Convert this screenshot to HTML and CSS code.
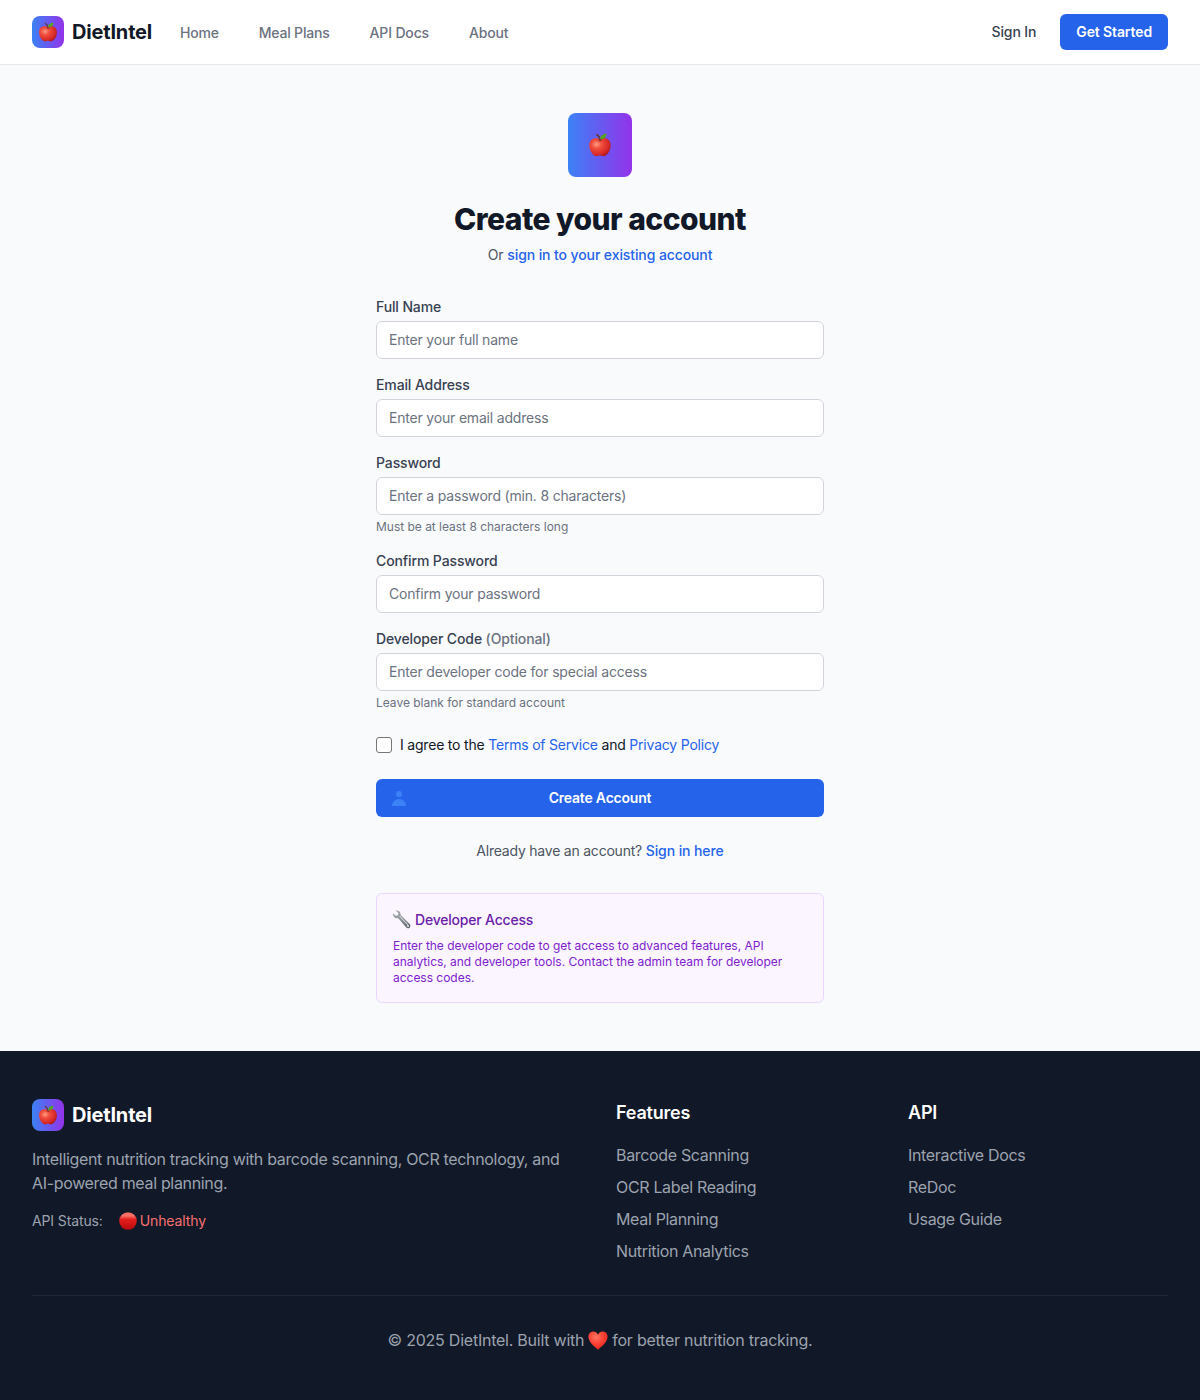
FILE: index.html
```html
<!DOCTYPE html>
<html lang="en">
<head>
<meta charset="utf-8">
<title>Create account - DietIntel</title>
<link rel="stylesheet" href="styles.css">
</head>
<body>
<svg class="defs" aria-hidden="true">
  <defs>
    <radialGradient id="apple-skin" cx=".34" cy=".34" r=".75"><stop offset="0" stop-color="#ff9c82"/><stop offset=".32" stop-color="#f04e3d"/><stop offset=".75" stop-color="#d82a28"/><stop offset="1" stop-color="#a8141a"/></radialGradient>
    <linearGradient id="ball" x1="0" y1="0" x2="0" y2="1"><stop offset="0" stop-color="#ff6a60"/><stop offset=".2" stop-color="#fb7068"/><stop offset=".42" stop-color="#e21d1a"/><stop offset="1" stop-color="#b90c10"/></linearGradient>
    <radialGradient id="heart-fill" cx=".4" cy=".3" r=".75"><stop offset="0" stop-color="#ff7562"/><stop offset=".5" stop-color="#fb4336"/><stop offset="1" stop-color="#dd211d"/></radialGradient>
    <linearGradient id="steel" x1="0" y1="0" x2="1" y2="1"><stop offset="0" stop-color="#a9b0b3"/><stop offset=".5" stop-color="#8b9296"/><stop offset="1" stop-color="#555b60"/></linearGradient>
    <symbol id="apple" viewBox="0 0 24 24">
      <path d="M12 6.5C9.5 4.2 1.3 4.4 1.3 12.3C1.3 18 5.2 23.2 8.5 23.2C10 23.2 10.8 22.5 12 22.5S14 23.2 15.5 23.2C18.8 23.2 22.7 18 22.7 12.3C22.7 4.4 14.5 4.2 12 6.5Z" fill="url(#apple-skin)"/>
      <path d="M9.4 6.9Q12 9.4 14.6 6.9" fill="none" stroke="#941116" stroke-width=".8" opacity=".5"/>
      <path d="M12.2 7.4C12 5 11 3 8.8 1.7" fill="none" stroke="#643829" stroke-width="1.4" stroke-linecap="round"/>
      <path d="M12.3 6.2C12 2.5 15 1.2 18.4.5C18.6 4 16.4 6.4 12.3 6.2Z" fill="#55a51f"/>
    </symbol>
  </defs>
</svg>
<nav class="navbar">
  <a class="brand"><span class="logo"><svg class="logo-apple"><use href="#apple"/></svg></span><span class="brand-name">DietIntel</span></a>
  <div class="nav-links"><a>Home</a><a>Meal Plans</a><a>API Docs</a><a>About</a></div>
  <div class="nav-actions"><a class="sign-in">Sign In</a><a class="get-started">Get Started</a></div>
</nav>
<main class="main">
  <div class="register">
    <div class="hero-logo"><svg class="hero-apple"><use href="#apple"/></svg></div>
    <h1 class="title">Create your account</h1>
    <p class="subtitle">Or <a class="link strong">sign in to your existing account</a></p>
    <form class="form">
      <div class="field"><label for="name">Full Name</label><input id="name" type="text" placeholder="Enter your full name"></div>
      <div class="field"><label for="email">Email Address</label><input id="email" type="email" placeholder="Enter your email address"></div>
      <div class="field"><label for="password">Password</label><input id="password" type="password" placeholder="Enter a password (min. 8 characters)"><p class="hint">Must be at least 8 characters long</p></div>
      <div class="field"><label for="confirm">Confirm Password</label><input id="confirm" type="password" placeholder="Confirm your password"></div>
      <div class="field"><label for="code">Developer Code <span class="optional">(Optional)</span></label><input id="code" type="text" placeholder="Enter developer code for special access"><p class="hint">Leave blank for standard account</p></div>
    </form>
    <div class="terms"><input id="terms" type="checkbox"><label for="terms">I agree to the <a class="link">Terms of Service</a> and <a class="link">Privacy Policy</a></label></div>
    <button class="submit" type="button"><svg class="user-icon" viewBox="0 0 20 20"><path fill="currentColor" d="M10 9a3 3 0 100-6 3 3 0 000 6zm-7 9a7 7 0 1114 0H3z"/></svg>Create Account</button>
    <p class="have-account">Already have an account? <a class="link strong">Sign in here</a></p>
    <section class="developer">
      <h2><svg class="wrench" viewBox="0 0 20 20"><path d="M1.1 3.5L4 6.1L6.4 5.4L6.7 3.1L3.8.6C6.7-.1 9.5 2 9 5.3L18.6 14.8C19.7 16 19.5 17.6 18.5 18.6S15.7 19.3 14.8 18.2L6.3 8.5C3.4 9.5.3 6.7 1.1 3.5Z" fill="url(#steel)"/><path d="M8 6.4L16.8 15.6" stroke="#ccd0d2" stroke-width="1.2"/><circle cx="16.9" cy="16.8" r="1" fill="#f3edf8"/></svg>Developer Access</h2>
      <p>Enter the developer code to get access to advanced features, API analytics, and developer tools. Contact the admin team for developer access codes.</p>
    </section>
  </div>
</main>
<footer class="footer">
  <div class="footer-grid">
    <div class="about">
      <a class="brand"><span class="logo"><svg class="logo-apple"><use href="#apple"/></svg></span><span class="brand-name">DietIntel</span></a>
      <p class="tagline">Intelligent nutrition tracking with barcode scanning, OCR technology, and AI-powered meal planning.</p>
      <div class="status"><span>API Status:</span><span class="unhealthy"><svg class="ball" viewBox="0 0 18 18"><circle cx="9" cy="9" r="8.8" fill="url(#ball)"/></svg>Unhealthy</span></div>
    </div>
    <div class="column"><h3>Features</h3><ul><li>Barcode Scanning</li><li>OCR Label Reading</li><li>Meal Planning</li><li>Nutrition Analytics</li></ul></div>
    <div class="column"><h3>API</h3><ul><li>Interactive Docs</li><li>ReDoc</li><li>Usage Guide</li></ul></div>
  </div>
  <div class="copyright"><span>© 2025 DietIntel. Built with</span><svg class="heart" viewBox="0 0 20 18" preserveAspectRatio="none"><path d="M10 17.7C6.5 14.8.4 10.6.4 5.5C.4 2.6 2.5.5 5.3.5C7.4.5 9.1 1.6 10 3.5C10.9 1.6 12.6.5 14.7.5C17.5.5 19.6 2.6 19.6 5.5C19.6 10.6 13.5 14.8 10 17.7Z" fill="url(#heart-fill)"/></svg><span>for better nutrition tracking.</span></div>
</footer>
</body>
</html>
```
FILE: styles.css
```css
* { box-sizing: border-box; }
body { margin: 0; background: #f9fafb; color: #111827; font: 14px/20px Inter, "Liberation Sans", sans-serif; letter-spacing: -.2px; }
h1, h2, h3, p, ul { margin: 0; padding: 0; }
svg { flex: none; }
.defs { position: absolute; width: 0; height: 0; }

.navbar { height: 65px; padding: 0 32px; display: flex; align-items: center; background: #fff; border-bottom: 1px solid #e5e7eb; }
.brand { display: flex; align-items: center; gap: 8px; height: 32px; }
.logo { display: flex; align-items: center; justify-content: center; width: 32px; height: 32px; border-radius: 8px; background: linear-gradient(90deg, #3b82f6, #9333ea); }
.logo-apple { width: 20px; height: 20px; }
.brand-name { width: 80px; font-size: 20px; line-height: 28px; font-weight: 700; letter-spacing: -.18px; white-space: nowrap; }
.nav-links { display: flex; gap: 40px; margin-left: 28px; padding-top: 2px; color: #6b7280; font-weight: 500; }
.nav-links a:nth-child(3) { letter-spacing: -.15px; }
.nav-actions { display: flex; align-items: center; gap: 24px; margin-left: auto; font-weight: 500; letter-spacing: -.12px; }
.sign-in { color: #374151; }
.get-started { padding: 8px 16px; border-radius: 6px; background: #2563eb; color: #fff; font-weight: 600; }

.main { padding: 48px 0; display: flex; justify-content: center; }
.register { width: 448px; }
.hero-logo { display: flex; align-items: center; justify-content: center; width: 64px; height: 64px; margin: 0 auto; border-radius: 8px; background: linear-gradient(90deg, #3b82f6, #9333ea); }
.hero-apple { width: 24px; height: 24px; }
.title { margin-top: 24px; text-align: center; font-size: 30px; line-height: 36px; font-weight: 800; letter-spacing: -.53px; }
.subtitle { margin-top: 8px; text-align: center; color: #4b5563; letter-spacing: -.1px; }
.link { color: #2563eb; }
.strong { font-weight: 500; letter-spacing: -.1px; }
.form { display: flex; flex-direction: column; gap: 16px; margin-top: 32px; }
.field { display: flex; flex-direction: column; gap: 4px; }
.field label { color: #374151; font-weight: 500; letter-spacing: -.12px; }
.field .optional { color: #6b7280; }
.field input { width: 100%; height: 38px; padding: 7px 12px 9px; border: 1px solid #d1d5db; border-radius: 6px; background: #fff; font: inherit; letter-spacing: -.19px; }
.field input::placeholder { color: #6b7280; opacity: 1; }
.hint { font-size: 12px; line-height: 16px; color: #6b7280; letter-spacing: -.02px; }
.terms { display: flex; align-items: center; gap: 8px; margin-top: 24px; }
.terms input { appearance: none; width: 16px; height: 16px; margin: 0; border: 1px solid #767676; border-radius: 3px; background: #fff; }
.submit { position: relative; display: block; width: 100%; height: 38px; margin-top: 24px; padding: 0; border: 0; border-radius: 6px; background: #2563eb; color: #fff; font: inherit; font-weight: 600; letter-spacing: -.2px; }
.user-icon { position: absolute; left: 13px; top: 9px; width: 20px; height: 20px; color: #3b82f6; }
.have-account { margin-top: 24px; text-align: center; color: #4b5563; letter-spacing: -.22px; }
.developer { margin-top: 32px; padding: 16px; border: 1px solid #e9d5ff; border-radius: 6px; background: #faf5ff; }
.developer h2 { display: flex; align-items: center; gap: 4px; margin-left: -1px; font-size: 14px; line-height: 20px; font-weight: 500; color: #6b21a8; }
.wrench { width: 19px; height: 19px; margin-top: -2px; }
.developer p { margin-top: 8px; font-size: 12px; line-height: 16px; color: #7e22ce; letter-spacing: -.02px; }

.footer { height: 349px; padding: 48px 32px; background: #111827; color: #9ca3af; font-size: 16px; line-height: 24px; letter-spacing: -.33px; }
.footer .brand { color: #fff; }
.footer-grid { display: grid; grid-template-columns: repeat(4, 1fr); column-gap: 32px; }
.about { grid-column: span 2; }
.tagline { margin-top: 16px; }
.status { display: flex; gap: 16px; margin-top: 16px; font-size: 14px; line-height: 20px; letter-spacing: -.12px; }
.unhealthy { display: flex; align-items: center; gap: 3px; color: #f87171; }
.ball { width: 18px; height: 18px; margin-top: -1px; }
.column h3 { color: #fff; font-size: 18px; line-height: 28px; font-weight: 600; letter-spacing: -.2px; }
.column ul { display: flex; flex-direction: column; gap: 8px; margin-top: 16px; list-style: none; }
.copyright { display: flex; justify-content: center; align-items: center; gap: 4px; margin-top: 32px; padding-top: 32px; border-top: 1px solid #1f2937; letter-spacing: -.24px; }
.heart { width: 20px; height: 19px; }
```
